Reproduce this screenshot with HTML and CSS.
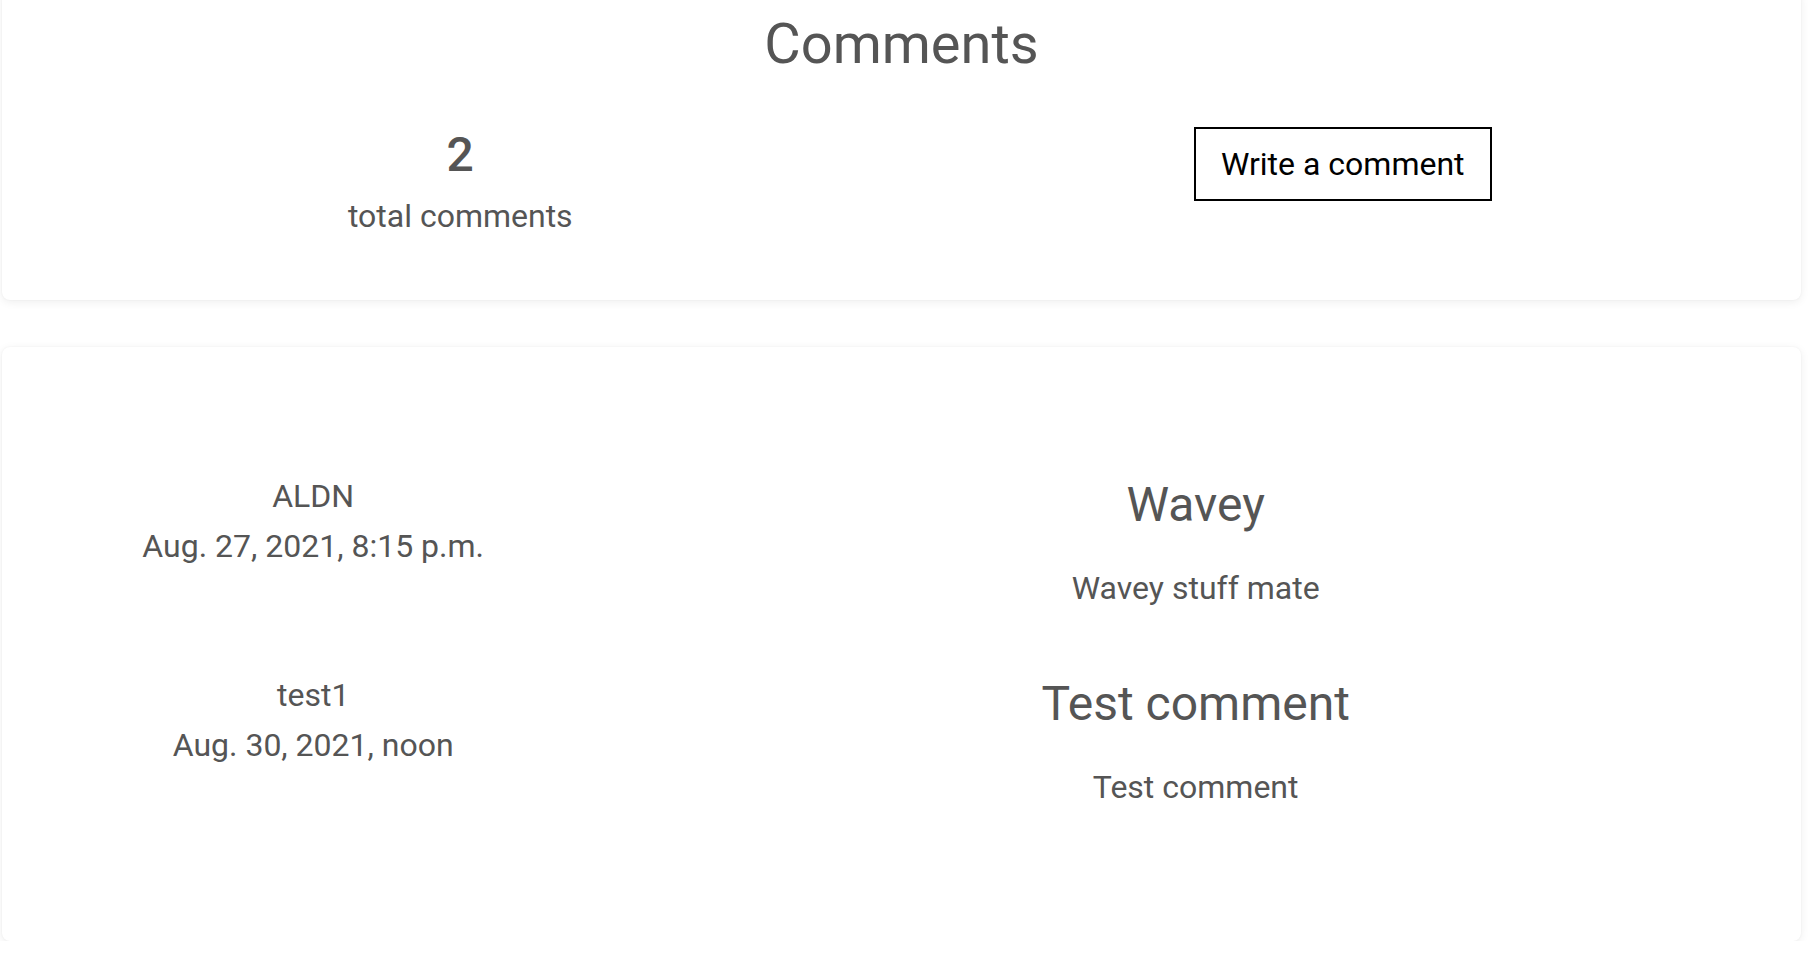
FILE: index.html
```html
<!DOCTYPE html>
<html lang="en">
<head>
<meta charset="utf-8">
<title>Comments</title>
<link rel="stylesheet" href="styles.css">
</head>
<body>
<main class="page">
  <section class="card summary">
    <h2 class="title">Comments</h2>
    <div class="summary-row">
      <div class="count">
        <h3 class="count-num">2</h3>
        <p class="count-label">total comments</p>
      </div>
      <div class="action">
        <button class="write-btn" type="button">Write a comment</button>
      </div>
    </div>
  </section>

  <section class="card list">
    <article class="comment">
      <div class="meta">
        <p class="author">ALDN</p>
        <p class="date">Aug. 27, 2021, 8:15 p.m.</p>
      </div>
      <div class="body">
        <h3 class="comment-title">Wavey</h3>
        <p class="comment-text">Wavey stuff mate</p>
      </div>
    </article>
    <article class="comment">
      <div class="meta">
        <p class="author">test1</p>
        <p class="date">Aug. 30, 2021, noon</p>
      </div>
      <div class="body">
        <h3 class="comment-title">Test comment</h3>
        <p class="comment-text">Test comment</p>
      </div>
    </article>
  </section>
</main>
</body>
</html>
```

FILE: styles.css
```css
* { box-sizing: border-box; }

html, body {
  margin: 0;
  padding: 0;
  background: #ffffff;
}

body {
  font-family: Roboto, "Liberation Sans", Arial, sans-serif;
  color: #555555;
  font-size: 32px;
  overflow: hidden;
}

.page {
  padding: 0 19px 0 2px;
  display: flex;
  flex-direction: column;
  gap: 47px;
}

.card {
  background: #ffffff;
  border-radius: 8px;
  box-shadow: 0 2px 10px rgba(0, 0, 0, 0.07), 0 0 2px rgba(0, 0, 0, 0.05);
  padding: 0 17px;
}

/* ---------- summary card ---------- */
.summary {
  margin-top: -10px;
  padding-top: 21px;
  padding-bottom: 60px;
  text-align: center;
}

.title {
  margin: 0;
  font-size: 56px;
  font-weight: 400;
  line-height: 67px;
}

.summary-row {
  margin-top: 48px;
  display: grid;
  grid-template-columns: 1fr 1fr;
}

.count-num {
  margin: 0 0 9px;
  font-size: 48px;
  font-weight: 500;
  line-height: 57px;
}

.count-label {
  margin: 0;
  font-size: 32px;
  line-height: 48px;
}

.action {
  display: flex;
  justify-content: center;
  align-items: flex-start;
}

.write-btn {
  font-family: Roboto, "Liberation Sans", Arial, sans-serif;
  font-size: 32px;
  line-height: 48px;
  color: #000000;
  background: #ffffff;
  border: 2px solid #000000;
  border-radius: 0;
  padding: 11px 25px;
  margin-top: 1px;
  cursor: pointer;
}

/* ---------- comments list ---------- */
.list {
  padding-top: 124px;
  padding-bottom: 72px;
}

.comment {
  display: grid;
  grid-template-columns: 1fr 2fr;
  height: 199px;
  text-align: center;
}

.author,
.date {
  margin: 0;
  font-size: 32px;
  line-height: 50px;
}

.comment-title {
  margin: 6px 0 0;
  font-size: 48px;
  font-weight: 400;
  line-height: 56px;
}

.comment-text {
  margin: 31px 0 0;
  font-size: 32px;
  line-height: 48px;
}
```
